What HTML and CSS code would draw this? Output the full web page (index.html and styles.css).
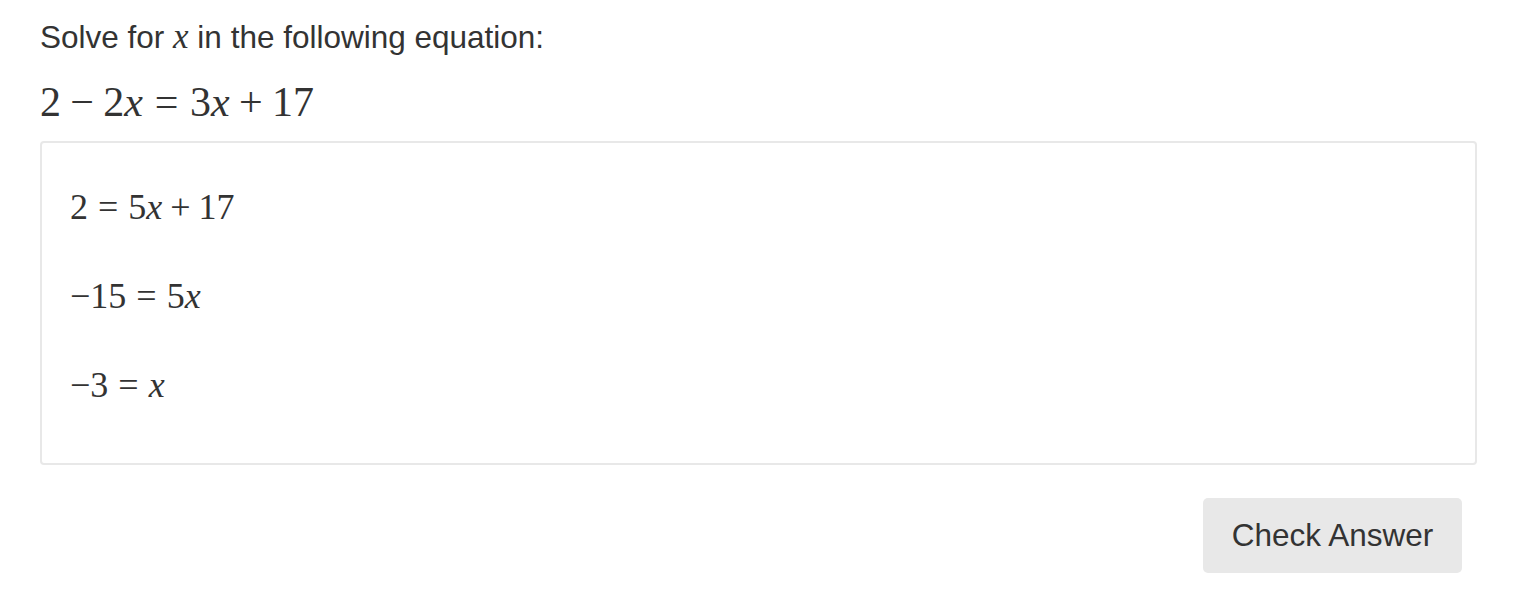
FILE: index.html
```html
<!DOCTYPE html>
<html>
<head>
<meta charset="utf-8">
<link rel="stylesheet" href="styles.css">
</head>
<body>
<div class="page">
  <p class="prompt">Solve for <span class="mi">x</span> in the following equation:</p>
  <div class="eq main-eq">
    <span class="mn">2</span><span class="bin">−</span><span class="mn">2</span><span class="mi">x</span><span class="rel">=</span><span class="mn">3</span><span class="mi">x</span><span class="bin">+</span><span class="mn">17</span>
  </div>
  <div class="work">
    <div class="eq step"><span class="mn">2</span><span class="rel">=</span><span class="mn">5</span><span class="mi">x</span><span class="bin">+</span><span class="mn">17</span></div>
    <div class="eq step"><span class="mn">−15</span><span class="rel">=</span><span class="mn">5</span><span class="mi">x</span></div>
    <div class="eq step"><span class="mn">−3</span><span class="rel">=</span><span class="mi">x</span></div>
  </div>
  <div class="actions">
    <button class="check">Check Answer</button>
  </div>
</div>
</body>
</html>
```
FILE: styles.css
```css
html, body {
  margin: 0;
  padding: 0;
  background: #fff;
}
body {
  font-family: "Liberation Sans", Arial, sans-serif;
  color: #333;
}
.page {
  padding: 14px 41px 0 40px;
}
.prompt {
  margin: 0;
  font-size: 31.5px;
  line-height: 46px;
}
.mi {
  font-family: "Liberation Serif", "Times New Roman", serif;
  font-style: italic;
}
.prompt .mi {
  font-size: 35px;
}
.eq {
  font-family: "Liberation Serif", "Times New Roman", serif;
  white-space: nowrap;
}
.main-eq {
  font-size: 42px;
  line-height: 48px;
  margin-top: 18px;
}
.bin {
  margin: 0 0.222em;
}
.rel {
  margin: 0 0.278em;
}
.work {
  margin-top: 15px;
  border: 2px solid #e8e8e8;
  border-radius: 4px;
  padding: 40px 28px 54px;
  display: flex;
  flex-direction: column;
  gap: 41px;
}
.step {
  font-size: 36px;
  line-height: 48px;
}
.actions {
  display: flex;
  justify-content: flex-end;
  padding-top: 33px;
  padding-right: 15px;
}
.check {
  font-family: "Liberation Sans", Arial, sans-serif;
  font-size: 31.5px;
  color: #333;
  background: #e8e8e8;
  border: none;
  border-radius: 5px;
  width: 259px;
  height: 75px;
  padding: 0;
}
```
